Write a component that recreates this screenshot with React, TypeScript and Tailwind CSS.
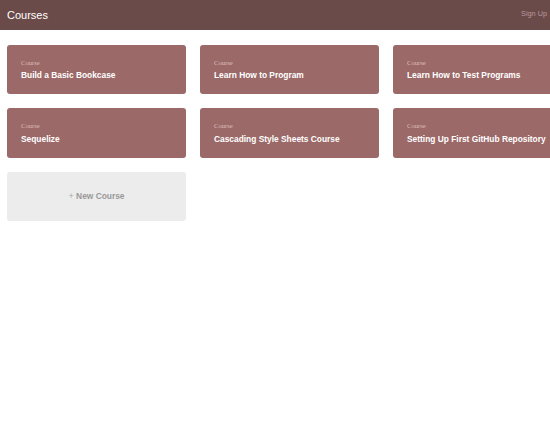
import React from "react";

const courses = [
  "Build a Basic Bookcase",
  "Learn How to Program",
  "Learn How to Test Programs",
  "Sequelize",
  "Cascading Style Sheets Course",
  "Setting Up First GitHub Repository",
];

export default function App() {
  return (
    <div className="min-h-[436px] w-[550px] overflow-hidden bg-white font-['Liberation_Sans',Arial,sans-serif]">
      <header className="flex h-[30px] items-center justify-between bg-[#6b4a4a] pl-[7px] pr-[3px]">
        <h1 className="text-[11px] leading-[30px] text-white">Courses</h1>
        <a className="mb-[1px] text-[7.3px] text-[#b8999a]">Sign Up</a>
      </header>
      <main className="grid grid-cols-[179px_179px_179px] gap-x-[14px] gap-y-[14px] pl-[7px] pt-[14.7px]">
        {courses.map((c) => (
          <div key={c} className="h-[49.6px] rounded-[3px] bg-[#9b6968] pl-[14px] pt-[14px]">
            <div className="font-['Liberation_Serif',serif] text-[6.6px] leading-[8px] text-[#dcbdbb]">Course</div>
            <div className="mt-[3.3px] whitespace-nowrap text-[8.4px] font-bold leading-[10px] text-white">{c}</div>
          </div>
        ))}
        <div className="flex h-[49.6px] items-center justify-center rounded-[3px] bg-[#ececec] pt-[1px]">
          <span className="whitespace-nowrap text-[8.4px] font-bold text-[#999999]">
            <span className="text-[9px] font-normal text-[#aaaaaa]">+</span> New Course
          </span>
        </div>
      </main>
    </div>
  );
}
